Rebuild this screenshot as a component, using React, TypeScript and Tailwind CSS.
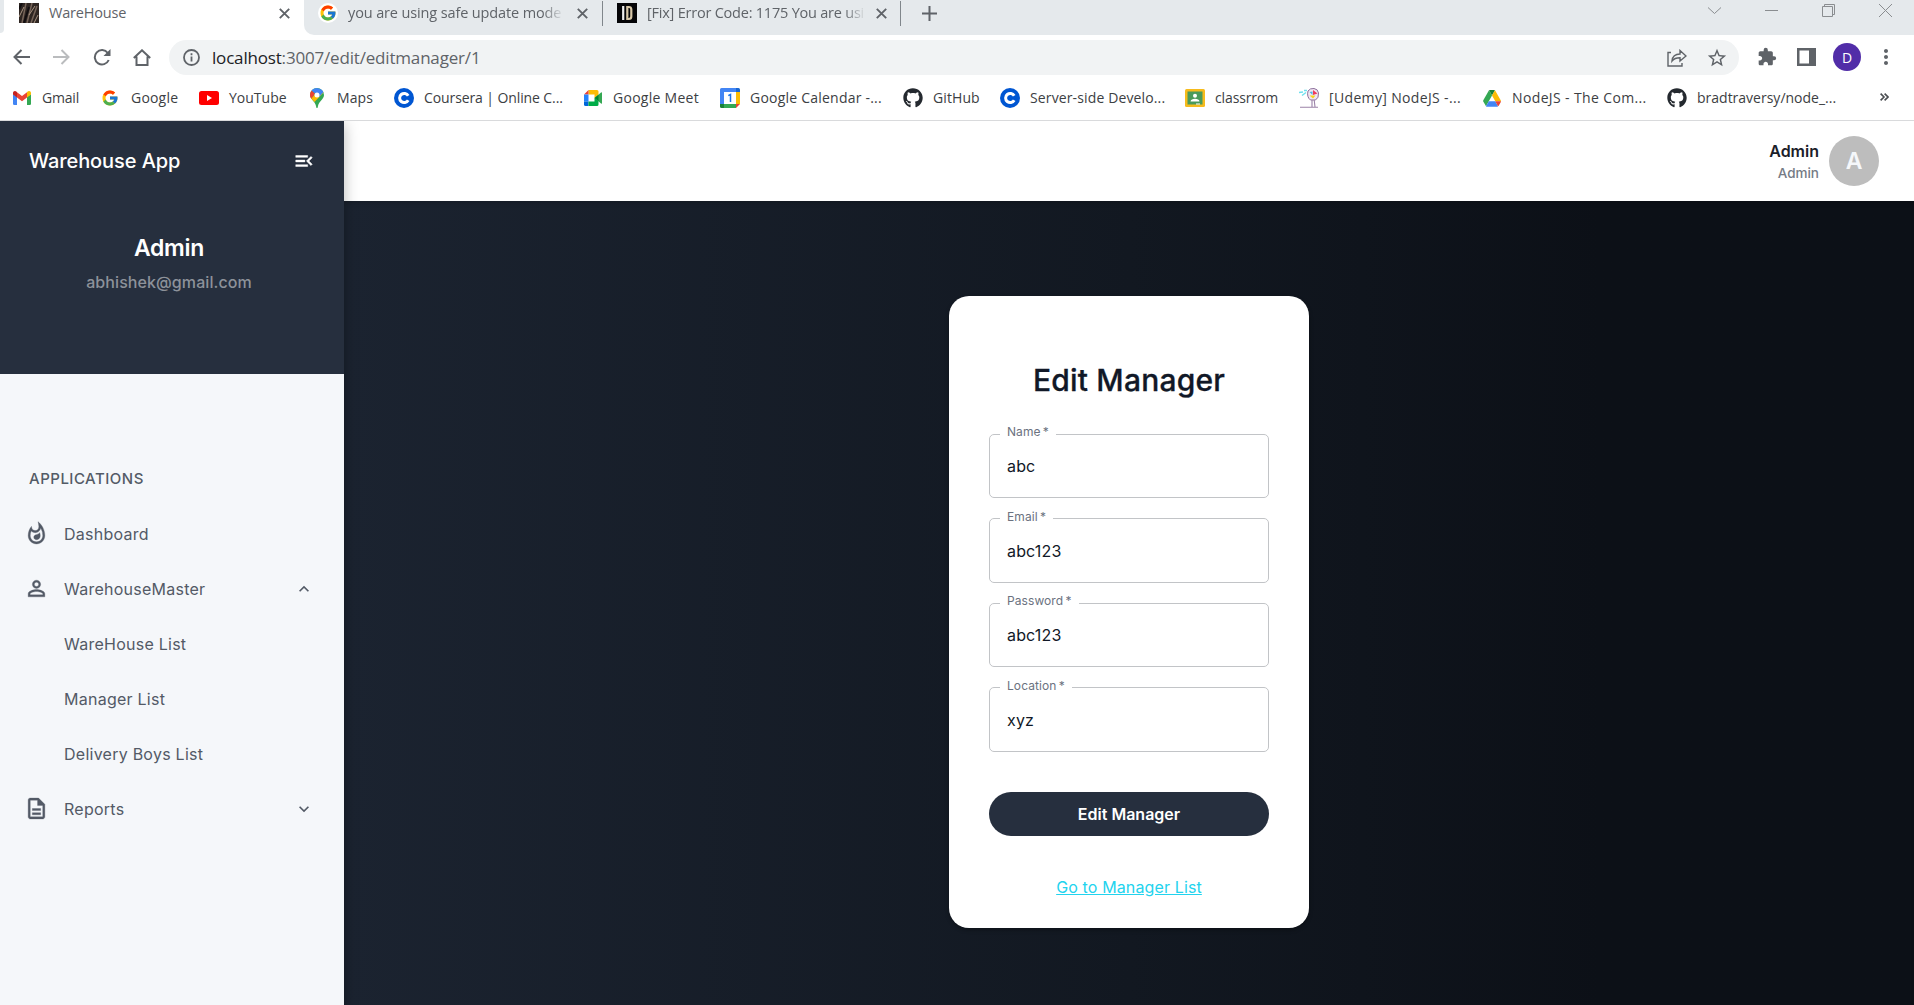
import React from 'react';
import { FcGoogle } from 'react-icons/fc';
import { FaGithub } from 'react-icons/fa';
import {
  MdMenuOpen,
  MdOutlineWhatshot,
  MdPersonOutline,
  MdOutlineDescription,
  MdExpandLess,
  MdExpandMore,
  MdExtension,
  MdMoreVert,
  MdStarBorder,
} from 'react-icons/md';

const Gmail = () => (
  <svg width="18" height="14" viewBox="0 0 18 14">
    <path d="M0 3v9.800q0 1.200 1.200 1.200H4V6z" fill="#4285f4" />
    <path d="M18 3v9.800q0 1.200-1.200 1.200H14V6z" fill="#34a853" />
    <path d="M14 1.300V6.500l4-3V2c0-1.800-2-2.600-3.300-1.500z" fill="#fbbc04" />
    <path d="M4 6.500V1.300l5 3.800 5-3.800v5.200l-5 3.700z" fill="#ea4335" />
    <path d="M0 2v1.500l4 3V1.300L3.300.5C2-.6 0 .2 0 2z" fill="#c5221f" />
  </svg>
);

const YouTube = () => (
  <svg width="20" height="14" viewBox="0 0 20 14">
    <rect width="20" height="14" rx="2.500" fill="#f00" />
    <path d="M8 4v6l5-3z" fill="#fff" />
  </svg>
);

const Maps = () => (
  <svg width="14" height="20" viewBox="0 0 14 20">
    <path d="M7 0a7 7 0 0 1 7 7c0 4-5 6-6 11-.3 1.700-.5 2-1 2s-.7-.3-1-2C5 13 0 11 0 7a7 7 0 0 1 7-7z" fill="#34a853" />
    <path d="M1.600 2.600 5 5.500 1.500 11C.5 9.500 0 8.500 0 7c0-1.700.6-3.200 1.600-4.400z" fill="#ea4335" />
    <path d="M1.300 10.600 9 2l4.500 2.500L4.500 14c-1.300-1.500-2.500-2.300-3.200-3.400z" fill="#fbbc04" />
    <path d="M1.600 2.600A7 7 0 0 1 13.400 4.300L9.200 8.700 5 5.500z" fill="#4285f4" />
    <circle cx="7" cy="7" r="2.500" fill="#fff" />
  </svg>
);

const Coursera = () => (
  <svg width="20" height="20" viewBox="0 0 20 20">
    <circle cx="10" cy="10" r="10" fill="#0056d2" />
    <path d="M14.200 12.300A4.600 4.600 0 1 1 14.200 7.700" fill="none" stroke="#fff" strokeWidth="3" />
  </svg>
);

const Meet = () => (
  <svg width="19" height="16" viewBox="0 0 19 16">
    <path d="M4.500 0H13q1.500 0 1.500 1.500V5l-4 3V4.500h-6z" fill="#fbbc04" />
    <path d="M4.500 0v4.500H0z" fill="#ea4335" />
    <path d="M0 4.500h4.500v7H0z" fill="#2684fc" />
    <path d="M0 11.500h4.500V16h-3Q0 16 0 14.500z" fill="#0066da" />
    <path d="M4.500 11.500h6V8l4 3v3.500q0 1.500-1.500 1.500H4.500z" fill="#00ac47" />
    <path d="M10.500 8 17 2.500q1-.6 1 .5v10q0 1.100-1 .5z" fill="#34a853" />
    <path d="M10.500 8l4-3.300v6.600z" fill="#00832d" />
  </svg>
);

const Calendar = () => (
  <svg width="20" height="20" viewBox="0 0 20 20">
    <path d="M1.500 0H16v4H4v12H0V1.500Q0 0 1.500 0z" fill="#4285f4" />
    <path d="M16 0h2.500Q20 0 20 1.500V4h-4z" fill="#1967d2" />
    <path d="M16 4h4v12h-4z" fill="#fbbc04" />
    <path d="M4 16h12v4H4z" fill="#34a853" />
    <path d="M0 16h4v4H1.500Q0 20 0 18.500z" fill="#188038" />
    <path d="M16 16h4l-4 4z" fill="#ea4335" />
    <path d="M4 4h12v12H4z" fill="#fff" />
    <path d="M8.300 7.600l2.200-1.100V14" fill="none" stroke="#1a73e8" strokeWidth="1.500" />
  </svg>
);

const Classroom = () => (
  <svg width="20" height="18" viewBox="0 0 20 18">
    <rect width="20" height="18" rx="1.500" fill="#f6bb1c" />
    <rect x="2.500" y="2.500" width="15" height="13" fill="#4a9a5b" />
    <circle cx="10" cy="6.700" r="2" fill="#fff" />
    <path d="M5.500 12.500c0-2 2.500-2.800 4.500-2.800s4.500.8 4.500 2.800z" fill="#fff" />
    <path d="M11 14.500h4v1h-4z" fill="#fff" />
  </svg>
);

const Udemy = () => (
  <svg width="20" height="20" viewBox="0 0 20 20">
    <path d="M9 3q2-3 6-2.500T19.500 5q.5 5-3 7h-5Q7.500 9 9 3z" fill="#f1e6f2" stroke="#8d6f9c" strokeWidth="1" />
    <path d="M14 2l4.500 3.500L14 7z" fill="#ef3b5d" />
    <path d="M10.500 7.500h6L14 10.500z" fill="#f7d61e" />
    <path d="M10.500 4l3-.5v3.500z" fill="#4bb5e8" />
    <path d="M0 4.500l4-.5M3 7.500l4-3M5 2.500h3" stroke="#6fe0ee" strokeWidth="1.500" />
    <path d="M1 19.300h18M13 12v7M15.200 12l.8 7" stroke="#9c83a8" strokeWidth="1.100" />
  </svg>
);

const Drive = () => (
  <svg width="18" height="17" viewBox="0 0 18 17">
    <path d="M6 .3 9 5.500 3 16.200.3 11.400Q0 10.800.3 10.200z" fill="#34a853" />
    <path d="M6 .3Q6.500 0 7 0h4q.6 0 1 .3L9 5.500z" fill="#188038" />
    <path d="M12 .3l5.700 9.900q.3.500.3 1h-5.700L9 5.500z" fill="#fbbc04" />
    <path d="M5.800 11.200h6.500l2.700 5q-.5.500-1 .5H4q-.6 0-1-.5z" fill="#4285f4" />
    <path d="M12.300 11.200H18q0 .5-.3 1l-2 3.500q-.3.400-.7.500z" fill="#ea4335" />
  </svg>
);

const Google = () => <FcGoogle size={18} className="mr-[3px] shrink-0" />;
const Github = () => <FaGithub size={20} color="#24292f" />;

const bookmarks = [
  { label: 'Gmail', Icon: Gmail, box: 'w-[89px]', track: 'tracking-[-0.2px]' },
  { label: 'Google', Icon: Google, box: 'w-[98px]', track: 'tracking-[0.2px]' },
  { label: 'YouTube', Icon: YouTube, box: 'w-[108px]', track: 'tracking-[0px]' },
  { label: 'Maps', Icon: Maps, box: 'w-[87px]', track: 'tracking-[0.1px]' },
  { label: 'Coursera | Online C...', Icon: Coursera, box: 'w-[189px]', track: 'tracking-[-0.1px]' },
  { label: 'Google Meet', Icon: Meet, box: 'w-[137px]', track: 'tracking-[0.27px]' },
  { label: 'Google Calendar -...', Icon: Calendar, box: 'w-[183px]', track: 'tracking-[0.22px]' },
  { label: 'GitHub', Icon: Github, box: 'w-[97px]', track: 'tracking-[0.1px]' },
  { label: 'Server-side Develo...', Icon: Coursera, box: 'w-[185px]', track: 'tracking-[0.13px]' },
  { label: 'classrrom', Icon: Classroom, box: 'w-[114px]', track: 'tracking-[-0.13px]' },
  { label: '[Udemy] NodeJS -...', Icon: Udemy, box: 'w-[183px]', track: 'tracking-[0.35px]' },
  { label: 'NodeJS - The Com...', Icon: Drive, box: 'w-[185px]', track: 'tracking-[0.37px]' },
  { label: 'bradtraversy/node_...', Icon: Github, box: 'w-[200px]', track: 'tracking-[0px]' },
];

const Close = () => (
  <svg width="11" height="11" viewBox="0 0 11 11" className="shrink-0">
    <path d="M.8.8l9.400 9.400M10.200.8L.8 10.200" stroke="#5f6368" strokeWidth="1.900" />
  </svg>
);

function TabStrip() {
  return (
    <div className="flex h-[35px] shrink-0 bg-white text-[14.500px] text-[#5f6368]">
      <div className="h-[33px] w-1 rounded-br-[6px] bg-[#e5e9ec]" />
      <div className="flex w-[300px] shrink-0 bg-white pt-[3px] pl-[15px]">
        <svg width="20" height="20" viewBox="0 0 20 20">
          <rect width="20" height="20" fill="#2f2622" />
          <path d="M3 20L7 0M8 20l5-20M12 20l6-17" stroke="#77655a" strokeWidth="1.500" />
          <path d="M0 14L5 4M10 12l6-9M15 20l4-8" stroke="#ab9684" strokeWidth="1" />
          <path d="M5 20l5-16M0 6l3-6" stroke="#120e10" strokeWidth="2" />
        </svg>
        <span className="ml-[10px] w-[230px] leading-[20px] tracking-[-0.200px]">WareHouse</span>
        <div className="pt-[5px]"><Close /></div>
      </div>
      <div className="flex flex-1 rounded-bl-[10px] bg-[#e5e9ec]">
        <div className="flex w-[298px] pt-[3px] pl-[14px]">
          <span className="flex size-5 items-center justify-center rounded-full bg-white"><FcGoogle size={18} /></span>
          <span className="ml-[10px] w-[216px] overflow-hidden mask-[linear-gradient(to_right,#000_90%,transparent)] leading-[20px] tracking-[-0.130px] whitespace-nowrap">you are using safe update mode</span>
          <div className="ml-[13px] pt-[5px]"><Close /></div>
        </div>
        <div className="mt-px h-[25px] w-px bg-[#80868b]" />
        <div className="flex w-[297px] pt-[3px] pl-[14px]">
          <svg width="20" height="20" viewBox="0 0 20 20">
            <rect width="20" height="20" fill="#050507" />
            <path d="M6.200 3v14" stroke="#eee" strokeWidth="2.200" />
            <path d="M10.300 4v12h1.500q2.500 0 2.500-2.500v-7Q14.300 4 11.800 4z" fill="none" stroke="#d8c8a8" strokeWidth="2.200" />
          </svg>
          <span className="ml-[10px] w-[219px] overflow-hidden mask-[linear-gradient(to_right,#000_90%,transparent)] leading-[20px] tracking-[-0.220px] whitespace-nowrap">[Fix] Error Code: 1175 You are usi</span>
          <div className="ml-[10px] pt-[5px]"><Close /></div>
        </div>
        <div className="mt-px h-[25px] w-px bg-[#80868b]" />
        <svg width="15" height="15" viewBox="0 0 15 15" className="mt-[6px] ml-[21px]">
          <path d="M7.500 0v15M0 7.500h15" stroke="#5f6368" strokeWidth="2" />
        </svg>
        <div className="mt-1 mr-[22px] ml-auto flex gap-[44px] text-[#8a8d90]">
          <svg width="13" height="13" viewBox="0 0 13 13" fill="none" stroke="currentColor"><path d="M0 3.500l6.500 6 6.500-6" /></svg>
          <svg width="13" height="13" viewBox="0 0 13 13" fill="none" stroke="currentColor"><path d="M0 6.500h13" /></svg>
          <svg width="13" height="13" viewBox="0 0 13 13" fill="none" stroke="currentColor"><path d="M.5 2.500h10v10H.5zM2.500 2.500v-2h10v10h-2" /></svg>
          <svg width="13" height="13" viewBox="0 0 13 13" fill="none" stroke="currentColor"><path d="M0 0l13 13M13 0L0 13" /></svg>
        </div>
      </div>
    </div>
  );
}

function Toolbar() {
  return (
    <div className="flex h-[45px] shrink-0 items-center bg-white pl-[13px] text-[#5f6368]">
      <div className="flex items-center pb-px">
        <svg width="17" height="16" viewBox="0 0 17 16" fill="none" stroke="currentColor" strokeWidth="2"><path d="M17 8H1.500M8.500 1l-7 7 7 7" /></svg>
        <svg width="17" height="16" viewBox="0 0 17 16" fill="none" stroke="#babcbe" strokeWidth="2" className="ml-[23px]"><path d="M0 8h15.500M8.500 1l7 7-7 7" /></svg>
        <svg width="18" height="17" viewBox="0 0 18 17" className="ml-[23px]">
          <path d="M14.800 4A7.200 7.200 0 1 0 15.700 11" fill="none" stroke="currentColor" strokeWidth="2" />
          <path d="M17.500 0v7H10.500z" fill="currentColor" />
        </svg>
        <svg width="18" height="17" viewBox="0 0 18 17" fill="none" stroke="currentColor" strokeWidth="2" className="ml-[22px]">
          <path d="M.8 9L9 1.300 17.200 9M3.500 7.500V16h11V7.500" />
        </svg>
      </div>
      <div className="ml-[18px] flex h-[35px] w-[1570px] items-center rounded-full bg-[#f1f3f4] pl-[14px]">
        <svg width="17" height="17" viewBox="0 0 17 17">
          <circle cx="8.500" cy="8.500" r="7.500" fill="none" stroke="currentColor" strokeWidth="1.800" />
          <path d="M8.500 7.500v5M8.500 4.300v2" stroke="currentColor" strokeWidth="1.800" />
        </svg>
        <span className="ml-[12px] text-[17px] tracking-[-0.180px]"><span className="text-[#202124]">localhost</span>:3007/edit/editmanager/1</span>
        <svg width="20" height="18" viewBox="0 0 20 18" fill="none" stroke="currentColor" strokeWidth="1.400" className="ml-auto">
          <path d="M4 3.500H1V17h14v-3" />
          <path d="M5 12c.5-5 3.500-7 8-7V1.500L19 7l-6 5V8.800c-3.500 0-6 .7-8 3.200z" />
        </svg>
        <MdStarBorder size={22} className="mr-[11px] ml-[19px]" />
      </div>
      <div className="flex items-center pb-px">
        <MdExtension size={20} className="ml-[18px]" />
        <svg width="19" height="18" viewBox="0 0 19 18" className="ml-[20px]">
          <path d="M0 0h19v18H0zM2.500 2.500v13H12v-13z" fill="currentColor" fillRule="evenodd" />
        </svg>
        <div className="ml-[17px] flex size-7 items-center justify-center rounded-full bg-[#512da8] text-[14px] text-white">D</div>
        <MdMoreVert size={24} className="ml-[13px]" />
      </div>
    </div>
  );
}

function BookmarkBar() {
  return (
    <div className="flex h-[41px] shrink-0 items-center border-b border-[#d9dadc] bg-white pb-[4px] pl-3 text-[14px] text-[#3c4043]">
      {bookmarks.map(({ label, Icon, box, track }) => (
        <div key={label} className={`flex shrink-0 items-center ${box}`}>
          <span className="flex h-5 w-5 shrink-0 items-center justify-center"><Icon /></span>
          <span className={`ml-[10px] pb-[2px] whitespace-nowrap ${track}`}>{label}</span>
        </div>
      ))}
      <svg width="9" height="8" viewBox="0 0 9 8" fill="none" stroke="#4a4d51" strokeWidth="1.600" className="mb-[2px] ml-[13px]"><path d="M.6.6L4 4 .6 7.400M4.600.6L8 4 4.600 7.400" /></svg>
    </div>
  );
}

const navItems = [
  { label: 'Dashboard', Icon: MdOutlineWhatshot },
  { label: 'WarehouseMaster', Icon: MdPersonOutline, Arrow: MdExpandLess },
  { label: 'WareHouse List' },
  { label: 'Manager List' },
  { label: 'Delivery Boys List' },
  { label: 'Reports', Icon: MdOutlineDescription, Arrow: MdExpandMore },
];

function Sidebar() {
  return (
    <aside className="z-10 flex w-[344px] shrink-0 flex-col bg-[#f5f7fa] shadow-[0_3px_14px_rgba(0,0,0,0.280)]">
      <div className="h-[253px] bg-[#262f3e] text-center text-white">
        <div className="flex h-20 items-center justify-between px-[29px]">
          <span className="text-[20px] font-medium tracking-[-0.080px]">Warehouse App</span>
          <MdMenuOpen size={22} strokeWidth={0.5} className="[&>path[fill=none]]:hidden" />
        </div>
        <div className="mt-[29px] pr-[6px] text-[23px] leading-[36px] font-semibold tracking-[-0.300px]">Admin</div>
        <div className="mt-[2px] pr-[6px] text-[16px] leading-[28px] font-medium tracking-[0.080px] text-[#8d929a]">abhishek@gmail.com</div>
      </div>
      <div className="mt-[90px] pl-[29px] text-[15px] leading-[30px] font-medium tracking-[0.500px] text-[#535b66]">APPLICATIONS</div>
      <nav className="mt-[12px] text-[16px] text-[#535a66]">
        {navItems.map(({ label, Icon, Arrow }) => (
          <div key={label} className="flex h-[55px] items-center pr-[30px] pl-[24px]">
            <span className="w-10">{Icon && <Icon size={25} strokeWidth={0.3} className="[&>path[fill=none]]:hidden" />}</span>
            <span className="flex-1 tracking-[0.250px]">{label}</span>
            {Arrow && <Arrow size={20} />}
          </div>
        ))}
      </nav>
    </aside>
  );
}

const fields = [
  { label: 'Name', value: 'abc' },
  { label: 'Email', value: 'abc123' },
  { label: 'Password', value: 'abc123' },
  { label: 'Location', value: 'xyz' },
];

function Content() {
  return (
    <div className="flex flex-1 flex-col">
      <header className="flex h-20 items-center justify-end bg-white pr-[35px]">
        <div className="mr-[10px] text-right">
          <div className="text-[16px] leading-[23px] font-semibold text-[#1b2029]">Admin</div>
          <div className="text-[13.500px] leading-[20px] font-medium text-[#757b85]">Admin</div>
        </div>
        <div className="flex size-[50px] items-center justify-center rounded-full bg-[#bdbdbd] text-[23px] font-semibold text-[#f5f7fa]">A</div>
      </header>
      <main className="flex-1 bg-linear-to-r from-[#1b2330] via-[#121821] via-50% to-[#0c1017] to-80% pt-[95px] shadow-[inset_0_4px_6px_-4px_rgba(0,0,0,0.300)]">
        <section className="ml-[605px] h-[632px] w-[360px] rounded-[20px] bg-white px-10 pt-[64px] text-center shadow-[0_2px_4px_rgba(0,0,0,0.300)]">
          <h1 className="text-[30px] leading-[40px] font-medium tracking-[0.200px] text-[#111827] [-webkit-text-stroke:0.3px_#111827]">Edit Manager</h1>
          <div className="mt-[24px] flex flex-col gap-[10.670px]">
            {fields.map(({ label, value }) => (
              <fieldset key={label} className="h-[74px] rounded-[5px] border border-[#c2c4c7] px-[10px] text-left">
                <legend className="px-[7px] text-[12px] leading-[20px] text-[#6b7280]"><span className="relative -top-[2px] tracking-[0.080px]">{label}{'\u2009*'}</span></legend>
                <div className="pl-[7px] text-[16px] leading-[44px] tracking-[0.150px] text-[#111827]">{value}</div>
              </fieldset>
            ))}
          </div>
          <button className="mt-[40px] h-11 w-full rounded-full bg-[#262f3e] text-[16px] font-[560] text-white">Edit Manager</button>
          <a className="mt-[36px] block text-[16px] leading-[30px] tracking-[0.130px] text-[#22d3ee] underline">Go to Manager List</a>
        </section>
      </main>
    </div>
  );
}

export default function App() {
  return (
    <div className="flex h-screen w-full flex-col overflow-hidden font-['Open_Sans',sans-serif]">
      <TabStrip />
      <Toolbar />
      <BookmarkBar />
      <div className="flex min-h-0 flex-1 overflow-hidden font-[Inter,sans-serif]">
        <Sidebar />
        <Content />
      </div>
    </div>
  );
}
